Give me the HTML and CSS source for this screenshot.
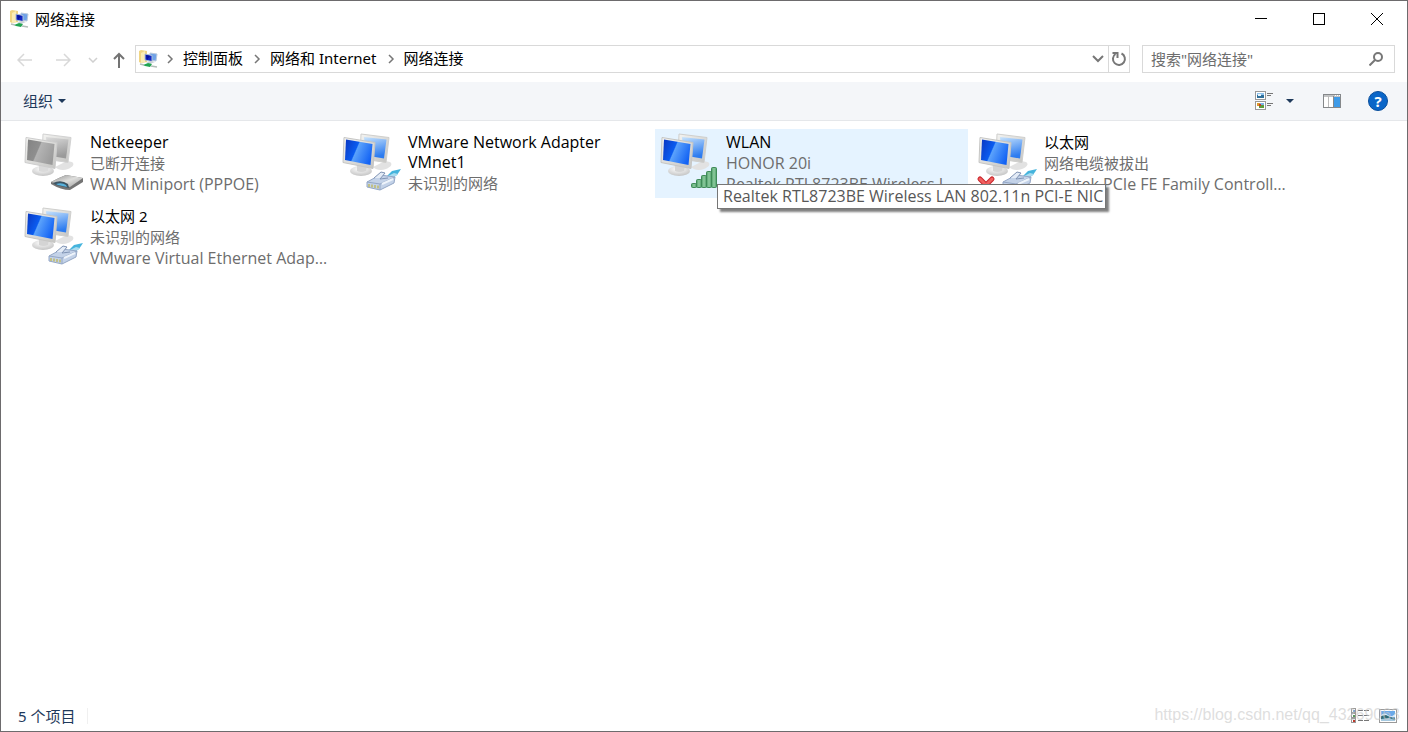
FILE: index.html
```html
<!DOCTYPE html>
<html lang="zh-CN">
<head>
    <meta charset="UTF-8">
    <meta name="viewport" content="width=device-width, initial-scale=1.0">
    <title>网络连接</title>
    <link rel="stylesheet" href="styles.css">
</head>
<body>

<!-- Shared drawings -->
<svg class="defs" aria-hidden="true">
    <defs>
        <linearGradient id="blueFront" x1="0" y1="0.2" x2="1" y2="0.6">
            <stop offset="0" stop-color="#0a3cc8"/>
            <stop offset="0.4" stop-color="#0a5cf0"/>
            <stop offset="0.44" stop-color="#5ba2fb"/>
            <stop offset="1" stop-color="#1262f4"/>
        </linearGradient>
        <linearGradient id="blueBack" x1="0" y1="0" x2="0.3" y2="1">
            <stop offset="0" stop-color="#c9e4fc"/>
            <stop offset="1" stop-color="#2d7cf0"/>
        </linearGradient>
        <linearGradient id="grayFront" x1="0" y1="0.2" x2="1" y2="0.6">
            <stop offset="0" stop-color="#858585"/>
            <stop offset="0.4" stop-color="#8f8f8f"/>
            <stop offset="0.44" stop-color="#b4b4b4"/>
            <stop offset="1" stop-color="#9a9a9a"/>
        </linearGradient>
        <linearGradient id="grayBack" x1="0" y1="0" x2="0.3" y2="1">
            <stop offset="0" stop-color="#dcdcdc"/>
            <stop offset="1" stop-color="#9a9a9a"/>
        </linearGradient>
        <linearGradient id="metal" x1="0" y1="0" x2="1" y2="1">
            <stop offset="0" stop-color="#f4f4f2"/>
            <stop offset="1" stop-color="#c4c4c2"/>
        </linearGradient>
        <linearGradient id="router" x1="0" y1="0" x2="1" y2="1">
            <stop offset="0" stop-color="#8d8d8d"/>
            <stop offset="0.5" stop-color="#dededc"/>
            <stop offset="1" stop-color="#9b9b9b"/>
        </linearGradient>
        <linearGradient id="bar" x1="0" y1="0" x2="1" y2="0">
            <stop offset="0" stop-color="#4a9f66"/>
            <stop offset="0.5" stop-color="#8fcba0"/>
            <stop offset="1" stop-color="#4a9f66"/>
        </linearGradient>
        <radialGradient id="base" cx="0.45" cy="0.3" r="0.7">
            <stop offset="0" stop-color="#ffffff"/>
            <stop offset="1" stop-color="#c4c4c4"/>
        </radialGradient>

        <symbol id="screens" viewBox="0 0 64 64">
            <path d="M34 36l12-6 5 1c3 2 1 5-4 7-5 2-10 1-13-2z" fill="#e2e2e2"/>
            <path d="M22 3l28 3.500-3 25-26-4z" fill="url(#metal)" stroke="#cfcfcd"/>
            <path d="M25 6l22.500 2.500-2.500 19-18-3z" fill="url(#blueBack)"/>
            <ellipse cx="22" cy="40" rx="11" ry="5" fill="url(#base)"/>
            <path d="M18 32l10 2-1 6q-5 2-9 0z" fill="#d4d4d4"/>
            <path d="M5 6.500l31 5-2 26-30-6z" fill="url(#metal)" stroke="#c6c6c4"/>
            <path d="M7 8.500l26.500 4.500-2 21-25.500-5z" fill="url(#blueFront)"/>
        </symbol>
        <symbol id="screensOff" viewBox="0 0 64 64">
            <path d="M34 36l12-6 5 1c3 2 1 5-4 7-5 2-10 1-13-2z" fill="#e2e2e2"/>
            <path d="M22 3l28 3.500-3 25-26-4z" fill="url(#metal)" stroke="#d2d2d2"/>
            <path d="M25 6l22.500 2.500-2.500 19-18-3z" fill="url(#grayBack)"/>
            <ellipse cx="22" cy="40" rx="11" ry="5" fill="url(#base)"/>
            <path d="M18 32l10 2-1 6q-5 2-9 0z" fill="#dadada"/>
            <path d="M5 6.500l31 5-2 26-30-6z" fill="url(#metal)" stroke="#cdcdcd"/>
            <path d="M7 8.500l26.500 4.500-2 21-25.500-5z" fill="url(#grayFront)"/>
        </symbol>
        <symbol id="cable" viewBox="0 0 64 64">
            <path d="M48 45l5-5 9-2-4 6-6 4z" fill="#45b4dd"/>
            <path d="M47 46l8-4 4 1-6 5z" fill="#a9dcef"/>
            <path d="M28 51l13-7 15 2-1 6-14 7-13-3z" fill="#c3d2e8" stroke="#94a7c6"/>
            <path d="M28 51l13 2 15-7M41 53v6" fill="none" stroke="#94a7c6"/>
            <path d="M35 47l7-6 4 1-5 6 8-1" fill="#e3ebf6" stroke="#7f93b4"/>
            <path d="M30 53v3M33 53.500v3M36 54v3M39 54.500v3" stroke="#c0bb6a" stroke-width="1.500"/>
            <path d="M43 53l11-5" stroke="#eef4fb" stroke-width="2"/>
        </symbol>
        <symbol id="folderNet" viewBox="0 0 20 20">
            <path d="M1 2l2-1 6 1v11l-6 1-2-1z" fill="#f0d583"/>
            <path d="M3 4l4-2v11l-4 1z" fill="#fbedb5"/>
            <path d="M12 4l7 1-1 7-6-1z" fill="#6fa2e8" stroke="#b8c8dc"/>
            <path d="M7 5l7 1.500v6L7 11z" fill="#1226c4" stroke="#aebfd6"/>
            <path d="M8 6l4 1-3 4z" fill="#0a129c"/>
            <path d="M8 13l6-1 3 1-5 2z" fill="#ccd2d8"/>
            <path d="M5 16l5-2 4 1-2 3-5-1z" fill="#22a552"/>
            <path d="M2 15l4 1M13 17l6 1" stroke="#b3bdb8" stroke-width="1.500"/>
        </symbol>
        <symbol id="chevron" viewBox="0 0 8 10">
            <path d="M2 1l4 4-4 4" fill="none" stroke="#777" stroke-width="1.500"/>
        </symbol>
    </defs>
</svg>

<div class="window">
    <header class="titlebar">
        <svg class="app-icon"><use href="#folderNet"/></svg>
        <h1>网络连接</h1>
        <div class="window-buttons">
            <button type="button" aria-label="最小化">
                <svg width="12" height="12" viewBox="0 0 12 12"><path d="M0 5.500h12" stroke="#000"/></svg>
            </button>
            <button type="button" aria-label="最大化">
                <svg width="12" height="12" viewBox="0 0 12 12"><rect x="0.500" y="0.500" width="11" height="11" fill="none" stroke="#000"/></svg>
            </button>
            <button type="button" aria-label="关闭">
                <svg width="12" height="12" viewBox="0 0 12 12"><path d="M0 0l12 12M12 0L0 12" stroke="#000"/></svg>
            </button>
        </div>
    </header>

    <div class="navbar">
        <div class="history">
            <button type="button" aria-label="后退" disabled>
                <svg width="16" height="14" viewBox="0 0 16 14"><path d="M15 7H1M7 1L1 7l6 6" fill="none" stroke="#d8d8d8" stroke-width="1.500"/></svg>
            </button>
            <button type="button" aria-label="前进" disabled>
                <svg width="16" height="14" viewBox="0 0 16 14"><path d="M1 7h14M9 1l6 6-6 6" fill="none" stroke="#d8d8d8" stroke-width="1.500"/></svg>
            </button>
            <button type="button" class="recent" aria-label="最近位置" disabled>
                <svg width="10" height="6" viewBox="0 0 10 6"><path d="M1 1l4 4 4-4" fill="none" stroke="#d0d0d0" stroke-width="1.500"/></svg>
            </button>
            <button type="button" class="up" aria-label="向上">
                <svg width="12" height="16" viewBox="0 0 12 16"><path d="M6 16V2M1 7l5-5 5 5" fill="none" stroke="#737373" stroke-width="2"/></svg>
            </button>
        </div>

        <nav class="address">
            <svg class="app-icon"><use href="#folderNet"/></svg>
            <svg class="chevron"><use href="#chevron"/></svg>
            <a href="#">控制面板</a>
            <svg class="chevron"><use href="#chevron"/></svg>
            <a href="#">网络和 Internet</a>
            <svg class="chevron"><use href="#chevron"/></svg>
            <a href="#">网络连接</a>
            <button type="button" class="drop" aria-label="以前的位置">
                <svg width="12" height="8" viewBox="0 0 12 8"><path d="M1 1l5 5 5-5" fill="none" stroke="#777" stroke-width="2"/></svg>
            </button>
            <button type="button" class="refresh" aria-label="刷新">
                <svg width="16" height="16" viewBox="0 0 16 16">
                    <path d="M10.500 2.500a6 6 0 1 1-6 .5" fill="none" stroke="#777" stroke-width="2"/>
                    <path d="M1.500 2h5v5" fill="none" stroke="#777" stroke-width="2"/>
                </svg>
            </button>
        </nav>

        <form class="search">
            <input type="text" aria-label="搜索" placeholder='搜索"网络连接"'>
            <button type="submit" aria-label="搜索">
                <svg width="14" height="14" viewBox="0 0 14 14">
                    <circle cx="9" cy="5" r="4" fill="none" stroke="#777" stroke-width="2"/>
                    <path d="M6 8l-5.500 5.500" stroke="#777" stroke-width="2"/>
                </svg>
            </button>
        </form>
    </div>

    <div class="toolbar">
        <button type="button" class="organize">组织
            <svg width="8" height="4" viewBox="0 0 8 4"><path d="M0 0h8L4 4z" fill="#1e395b"/></svg>
        </button>
        <div class="view-buttons">
            <button type="button" aria-label="更改视图">
                <svg width="18" height="20" viewBox="0 0 18 20">
                    <rect x="0.500" y="0.500" width="10" height="8" fill="#fff" stroke="#999"/>
                    <path d="M2 2h7v2H2z" fill="#8fc3ee"/>
                    <path d="M2 4h7v3H2z" fill="#2f6f9a"/>
                    <path d="M3 3h3v2H3z" fill="#e8f4fa"/>
                    <rect x="0.500" y="10.500" width="10" height="8" fill="#fff" stroke="#999"/>
                    <path d="M2 12h3v3H2z" fill="#d99b2b"/>
                    <path d="M5 12h4v2H5z" fill="#7fb0e6"/>
                    <path d="M4 14h5v3H4z" fill="#5c9a3b"/>
                    <path d="M4 13h2v2H4z" fill="#c8372d"/>
                    <path d="M12 2.500h6M12 4.500h4M12 12.500h6M12 14.500h4" stroke="#777"/>
                </svg>
            </button>
            <button type="button" class="view-more" aria-label="更多选项">
                <svg width="8" height="4" viewBox="0 0 8 4"><path d="M0 0h8L4 4z" fill="#1e395b"/></svg>
            </button>
            <button type="button" class="preview" aria-label="显示预览窗格">
                <svg width="18" height="14" viewBox="0 0 18 14">
                    <rect x="0.500" y="0.500" width="17" height="13" fill="#fff" stroke="#85888b"/>
                    <path d="M1 2h16" stroke="#85888b"/>
                    <path d="M5.500 2v11" stroke="#bbb"/>
                    <path d="M11 3h6v10h-6z" fill="#3f9be8"/>
                    <path d="M10.500 2v11" stroke="#85888b"/>
                    <path d="M12 1.500h1M14 1.500h1M16 1.500h1" stroke="#fff"/>
                </svg>
            </button>
            <button type="button" class="help" aria-label="获取帮助">?</button>
        </div>
    </div>

    <main class="connections">
        <article class="connection">
            <svg class="icon" viewBox="0 0 64 64">
                <use href="#screensOff"/>
                <path d="M30 51q7-4 15-7l17 3v4l-13 8q-9 0-19-6z" fill="#747474"/>
                <path d="M30 51q7-4 15-7l17 3-13 9z" fill="url(#router)"/>
                <path d="M32 52q8-4 15 1l1 4-13-3z" fill="#3d5564"/>
                <path d="M35 53q6-2 10 1l1 2-9-2z" fill="#58b2dd"/>
            </svg>
            <div class="info">
                <h2 class="latin">Netkeeper</h2>
                <p>已断开连接</p>
                <p class="latin">WAN Miniport (PPPOE)</p>
            </div>
        </article>

        <article class="connection">
            <svg class="icon" viewBox="0 0 64 64">
                <use href="#screens"/>
                <use href="#cable"/>
            </svg>
            <div class="info">
                <h2 class="latin">VMware Network Adapter VMnet1</h2>
                <p>未识别的网络</p>
            </div>
        </article>

        <article class="connection hover">
            <svg class="icon" viewBox="0 0 64 64">
                <use href="#screens"/>
                <g fill="url(#bar)" stroke="#3f8a58">
                    <rect x="34.500" y="52.500" width="5" height="4" rx="1"/>
                    <rect x="39.500" y="48.500" width="5" height="8" rx="1"/>
                    <rect x="44.500" y="44.500" width="5" height="12" rx="1"/>
                    <rect x="49.500" y="40.500" width="5" height="16" rx="1"/>
                    <rect x="54.500" y="36.500" width="5" height="20" rx="1"/>
                </g>
            </svg>
            <div class="info">
                <h2 class="latin">WLAN</h2>
                <p class="latin">HONOR 20i</p>
                <p class="latin">Realtek RTL8723BE Wireless LAN 802.11n PCI-E NIC</p>
            </div>
            <div class="tooltip latin" role="tooltip">Realtek RTL8723BE Wireless LAN 802.11n PCI-E NIC</div>
        </article>

        <article class="connection">
            <svg class="icon" viewBox="0 0 64 64">
                <use href="#screens"/>
                <use href="#cable"/>
                <path d="M5 48l12 12M17 48L5 60" stroke="#c9252b" stroke-width="5" stroke-linecap="round"/>
                <path d="M5 48l12 12M17 48L5 60" stroke="#f0605f" stroke-width="3" stroke-linecap="round"/>
            </svg>
            <div class="info">
                <h2>以太网</h2>
                <p>网络电缆被拔出</p>
                <p class="latin">Realtek PCIe FE Family Controller</p>
            </div>
        </article>

        <article class="connection">
            <svg class="icon" viewBox="0 0 64 64">
                <use href="#screens"/>
                <use href="#cable"/>
            </svg>
            <div class="info">
                <h2>以太网 2</h2>
                <p>未识别的网络</p>
                <p class="latin">VMware Virtual Ethernet Adapter for VMnet8</p>
            </div>
        </article>
    </main>

    <footer class="statusbar">
        <span class="count">5 个项目</span>
        <div class="layout-buttons">
            <button type="button" aria-label="详细信息">
                <svg width="18" height="16" viewBox="0 0 18 16">
                    <g fill="#fff" stroke="#999">
                        <rect x="0.500" y="0.500" width="4" height="4"/>
                        <rect x="0.500" y="5.500" width="4" height="4"/>
                        <rect x="0.500" y="10.500" width="4" height="4"/>
                    </g>
                    <path d="M2 2h2v2H2z" fill="#4a90d0"/>
                    <path d="M2 7h2v2H2z" fill="#5c9a5c"/>
                    <path d="M2 12h2v2H2z" fill="#c0392b"/>
                    <path d="M7 2.500h5M13 2.500h5M7 7.500h5M13 7.500h5M7 12.500h5M13 12.500h5" stroke="#777"/>
                </svg>
            </button>
            <button type="button" aria-label="大图标">
                <svg width="18" height="14" viewBox="0 0 18 14">
                    <rect x="0.500" y="0.500" width="17" height="13" fill="#fff" stroke="#999"/>
                    <path d="M2 2h14v10H2z" fill="#6aa9e9"/>
                    <path d="M2 6q4-3 7 0t7-1v3H2z" fill="#d8ecfa"/>
                    <path d="M2 7l5-1 4 2 5 1v3H2z" fill="#2f6b78"/>
                    <path d="M2 10l8-1 6 2v1H2z" fill="#a5c9e0"/>
                </svg>
            </button>
        </div>
        <span class="watermark">https://blog.csdn.net/qq_43269063</span>
    </footer>
</div>

</body>
</html>
```
FILE: styles.css
```css
* {
    box-sizing: border-box;
}

body {
    margin: 0;
    font-family: "Noto Sans", "Noto Sans CJK SC", sans-serif;
    font-size: 15px;
    color: #000;
    background-color: #fff;
}

h1, h2, p {
    margin: 0;
    font-size: 15px;
    font-weight: normal;
}

button {
    display: flex;
    align-items: center;
    justify-content: center;
    padding: 0;
    border: none;
    background: none;
    font: inherit;
    color: inherit;
}

svg {
    flex: none;
}

.defs {
    position: absolute;
    width: 0;
    height: 0;
}

.latin {
    font-family: "Open Sans", "Noto Sans", sans-serif;
    font-size: 16px;
}

.window {
    display: flex;
    flex-direction: column;
    min-height: 100vh;
    border: 1px solid #6d6b6d;
}

.app-icon {
    width: 20px;
    height: 20px;
}

/* Title bar */
.titlebar {
    display: flex;
    align-items: center;
    height: 36px;
    padding-left: 8px;
}

.titlebar h1 {
    margin-left: 6px;
    padding-bottom: 2px;
}

.window-buttons {
    display: flex;
    margin-left: auto;
    padding-right: 1px;
}

.window-buttons button {
    width: 58px;
    height: 36px;
}

/* Navigation */
.navbar {
    display: flex;
    align-items: center;
    height: 45px;
    padding: 0 12px 2px 10px;
}

.history {
    display: flex;
    width: 124px;
    padding-top: 2px;
}

.history button {
    width: 28px;
    height: 28px;
    margin-right: 10px;
}

.history .recent {
    width: 12px;
    margin-right: 6px;
}

.history .up {
    margin-right: 0;
}

.address {
    display: flex;
    flex: 1;
    align-items: center;
    height: 28px;
    margin-right: 12px;
    padding-left: 2px;
    border: 1px solid #d9d9d9;
}

.address a {
    padding: 0 1px 2px 0;
    color: #000;
    text-decoration: none;
}

.address .app-icon {
    margin-right: -1px;
}

.chevron {
    width: 8px;
    height: 10px;
    margin: 0 9px;
}

.drop {
    width: 20px;
    height: 26px;
    margin-left: auto;
}

.refresh {
    width: 21px;
    height: 26px;
    border-left: 1px solid #d9d9d9;
}

.search {
    display: flex;
    width: 253px;
    height: 28px;
    border: 1px solid #d9d9d9;
}

.search input {
    flex: 1;
    min-width: 0;
    padding: 0 8px;
    border: none;
    outline: none;
    background: none;
    font: inherit;
}

.search input::placeholder {
    color: #6d6d6d;
}

.search button {
    width: 36px;
}

/* Toolbar */
.toolbar {
    display: flex;
    align-items: center;
    justify-content: space-between;
    height: 39px;
    padding: 0 19px 0 22px;
    background-color: #f4f6f9;
    border-bottom: 1px solid #e5e7ea;
    color: #1e395b;
}

.organize {
    gap: 5px;
    padding-bottom: 2px;
}

.organize svg {
    margin-top: 2px;
}

.view-buttons {
    display: flex;
    align-items: center;
}

.view-more {
    margin-left: 13px;
}

.preview {
    margin-left: 29px;
}

.help {
    width: 20px;
    height: 20px;
    margin-left: 27px;
    border: 1px solid #0a4f9c;
    border-radius: 50%;
    background-color: #0a66c8;
    color: #fff;
    font-weight: bold;
}

/* Connection list */
.connections {
    display: grid;
    flex: 1;
    grid-template-columns: repeat(auto-fill, 313px);
    align-content: start;
    gap: 5px;
    padding: 8px 0 8px 18px;
}

.connection {
    position: relative;
    display: flex;
    min-height: 69px;
    padding: 2px 0 2px 2px;
}

.connection.hover {
    background-color: #e5f3ff;
}

.icon {
    width: 64px;
    height: 64px;
}

.info {
    flex: 1;
    min-width: 0;
    margin-left: 5px;
    padding-top: 1px;
}

.info h2 {
    line-height: 20px;
}

.info p {
    overflow: hidden;
    line-height: 21px;
    color: #6d6d6d;
    text-overflow: ellipsis;
    white-space: nowrap;
}

.info h2 + p {
    margin-top: 1px;
}

.tooltip {
    position: absolute;
    top: 55px;
    left: 62px;
    z-index: 1;
    padding: 0 2px 1px 5px;
    border: 1px solid #767676;
    background-color: #fff;
    box-shadow: 3px 3px 2px rgba(0, 0, 0, 0.5);
    color: #575757;
    line-height: 22px;
    white-space: nowrap;
}

/* Status bar */
.statusbar {
    position: relative;
    display: flex;
    align-items: center;
    justify-content: space-between;
    height: 30px;
    padding: 0 10px 0 17px;
    color: #1e395b;
}

.count {
    padding-right: 12px;
    border-right: 1px solid #f0f0f0;
    line-height: 16px;
}

.layout-buttons {
    display: flex;
    align-items: center;
    gap: 10px;
}

.watermark {
    position: absolute;
    right: 7px;
    bottom: 7px;
    color: rgba(200, 200, 200, 0.6);
    font-family: "Liberation Sans", Arial, sans-serif;
    font-size: 16px;
    line-height: 18px;
}
```
